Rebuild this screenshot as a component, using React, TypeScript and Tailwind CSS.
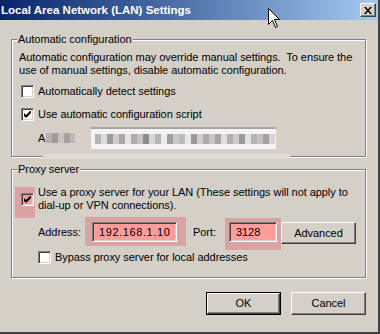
import type { ReactNode } from 'react'

const FONT = "font-['Liberation_Sans',Arial,sans-serif]"

function Check() {
  return (
    <svg width="7" height="7" viewBox="0 0 7 7" className="block">
      <path d="M0 2 L2 4 L7 -1 L7 2 L2 7 L0 5 Z" fill="#000" />
    </svg>
  )
}

function Checkbox({ checked, pink }: { checked?: boolean; pink?: boolean }) {
  return (
    <span
      className={`relative flex h-[13px] w-[13px] shrink-0 items-center justify-center border border-t-[#808080] border-l-[#808080] border-r-white border-b-white shadow-[inset_1px_1px_0_#404040,inset_-1px_-1px_0_#d4d0c8] ${
        pink ? 'bg-[#ff9c9c]' : 'bg-white'
      }`}
    >
      {checked ? <Check /> : null}
    </span>
  )
}

function GroupBox({ label, children, className }: { label: string; children: ReactNode; className?: string }) {
  return (
    <div
      className={`relative w-[355px] border border-[#808080] shadow-[1px_1px_0_#fff,inset_1px_1px_0_#fff] ${className ?? ''}`}
    >
      <span className="absolute left-[5px] -top-[7px] bg-[#d4d0c8] px-[1px] leading-[13px]">{label}</span>
      {children}
    </div>
  )
}

function Button({ children, def, className }: { children: ReactNode; def?: boolean; className?: string }) {
  const raised =
    'flex h-full w-full items-center justify-center border border-t-white border-l-white border-r-[#404040] border-b-[#404040] shadow-[inset_-1px_-1px_0_#808080]'
  if (def) {
    return (
      <button type="button" className={`border border-black bg-[#d4d0c8] ${className ?? ''}`}>
        <span className={raised}>{children}</span>
      </button>
    )
  }
  return (
    <button type="button" className={`bg-[#d4d0c8] ${className ?? ''}`}>
      <span className={raised}>{children}</span>
    </button>
  )
}

function Field({ value, className }: { value: string; className?: string }) {
  return (
    <div
      className={`relative flex h-[20px] items-center border border-t-[#808080] border-l-[#808080] border-r-white border-b-white bg-[#ff9c9c] pl-[6px] shadow-[inset_1px_1px_0_#404040,inset_-1px_-1px_0_#d4d0c8] ${className ?? ''}`}
    >
      {value}
    </div>
  )
}

function Blur() {
  const cells = ['#b9b4b4', '#dcdada', '#9f9a9a', '#cfcaca', '#a9a4a8', '#e4e2e2', '#b0aaae', '#c7c3c3', '#8f8b8f', '#d9d5d5', '#b6b2b6', '#ecebeb', '#a19c9f', '#cbc6c8', '#bdb8ba', '#e7e6e6', '#9c979a', '#d2cece', '#aea9ac', '#c9c5c5', '#a8a3a6', '#dedcdc', '#b3aeb1', '#cdc9c9', '#9d989b', '#e2e0e0', '#b8b3b5', '#c4c0c0', '#a5a0a3', '#d7d4d4']
  return (
    <div className="flex h-[10px]">
      {cells.map((c, i) => (
        <span key={i} className="h-full w-[6px]" style={{ background: c }} />
      ))}
    </div>
  )
}

function Cursor() {
  return (
    <svg width="13" height="21" viewBox="0 0 13 21" className="absolute left-[268px] top-[8px]">
      <path d="M0.5 0.5 L0.5 16.5 L4.5 12.5 L7.5 19.5 L9.5 18.5 L6.5 11.5 L11.5 11.5 Z" fill="#fff" stroke="#000" strokeWidth="1" />
    </svg>
  )
}

export default function App() {
  return (
    <div
      className={`relative h-[334px] w-[380px] overflow-hidden border-r-2 border-b-2 border-[#404040] bg-[#d4d0c8] text-[11px] leading-[13px] tracking-[-0.06px] text-black ${FONT}`}
    >
      <div className="flex h-[20px] items-center justify-between bg-gradient-to-r from-[#0a246a] to-[#a6caf0] pl-[1px] pr-[2px]">
        <span className="text-[11.5px] font-bold tracking-normal text-white">Local Area Network (LAN) Settings</span>
        <span className="flex h-[14px] w-[16px] items-center justify-center border border-t-white border-l-white border-r-[#404040] border-b-[#404040] bg-[#d4d0c8] shadow-[inset_-1px_-1px_0_#808080]">
          <svg width="8" height="7" viewBox="0 0 8 7">
            <path d="M0 0 L2 0 L4 2.5 L6 0 L8 0 L5 3.5 L8 7 L6 7 L4 4.5 L2 7 L0 7 L3 3.5 Z" fill="#000" />
          </svg>
        </span>
      </div>

      <div className="flex flex-col pl-[11px]">
        <GroupBox label="Automatic configuration" className="mt-[19px] pb-[7px] pt-[11px]">
          <p className="whitespace-pre pl-[7px]">
            {'Automatic configuration may override manual settings.  To ensure the\nuse of manual settings, disable automatic configuration.'}
          </p>
          <label className="mt-[8px] flex items-center gap-[4px] pl-[9px]">
            <Checkbox />
            <span>Automatically detect settings</span>
          </label>
          <label className="mt-[10px] flex items-center gap-[4px] pl-[9px]">
            <Checkbox checked />
            <span>Use automatic configuration script</span>
          </label>
          <div className="mt-[6px] flex h-[22px] items-center pl-[26px]">
            <span className="flex w-[53px] items-center">
              A
              <span className="ml-[1px] flex h-[10px]">
                <span className="w-[6px] bg-[#b5b1b1]" />
                <span className="w-[6px] bg-[#9e9a9c]" />
                <span className="w-[6px] bg-[#c6c2c2]" />
                <span className="w-[6px] bg-[#a4a0a2]" />
                <span className="w-[5px] bg-[#bdb9b9]" />
              </span>
            </span>
            <div className="flex h-[22px] w-[185px] items-center border-t-2 border-[#a8a4a4] bg-[#f4f3f3] pl-[4px]">
              <Blur />
            </div>
          </div>
          <span className="absolute -bottom-[3px] left-[31px] h-[5px] w-[247px] bg-[#dedbd4]" />
        </GroupBox>

        <GroupBox label="Proxy server" className="mt-[12px] pb-[13px] pt-[16px]">
          <label className="flex items-center gap-[4px] pl-[9px]">
            <span className="relative">
              <span className="absolute -left-[6px] -top-[6px] h-[31px] w-[20px] bg-[#d9a3a3]" />
              <Checkbox checked pink />
            </span>
            <span className="whitespace-pre">
              {'Use a proxy server for your LAN (These settings will not apply to\ndial-up or VPN connections).'}
            </span>
          </label>
          <div className="mt-[10px] flex items-start pl-[26px]">
            <span className="w-[54px] leading-[20px]">Address:</span>
            <div className="relative">
              <span className="absolute -left-[7px] -right-[9px] -top-[5px] -bottom-[4px] bg-[#d9a3a3]" />
              <Field value="192.168.1.10" className="w-[85px] tracking-[0.6px]" />
            </div>
            <span className="ml-[16px] w-[36px] leading-[20px]">Port:</span>
            <div className="relative">
              <span className="absolute -left-[4px] -right-[4px] -top-[4px] -bottom-[8px] bg-[#d9a3a3]" />
              <Field value="3128" className="w-[48px]" />
            </div>
            <Button className="ml-[4px] h-[22px] w-[75px]">Advanced</Button>
          </div>
          <label className="mt-[7px] flex items-center gap-[4px] pl-[26px]">
            <Checkbox />
            <span>Bypass proxy server for local addresses</span>
          </label>
        </GroupBox>

        <div className="mt-[14px] flex w-[355px] justify-end gap-[10px]">
          <Button def className="h-[23px] w-[75px]">
            OK
          </Button>
          <Button className="h-[23px] w-[75px]">Cancel</Button>
        </div>
      </div>

      <Cursor />
    </div>
  )
}
